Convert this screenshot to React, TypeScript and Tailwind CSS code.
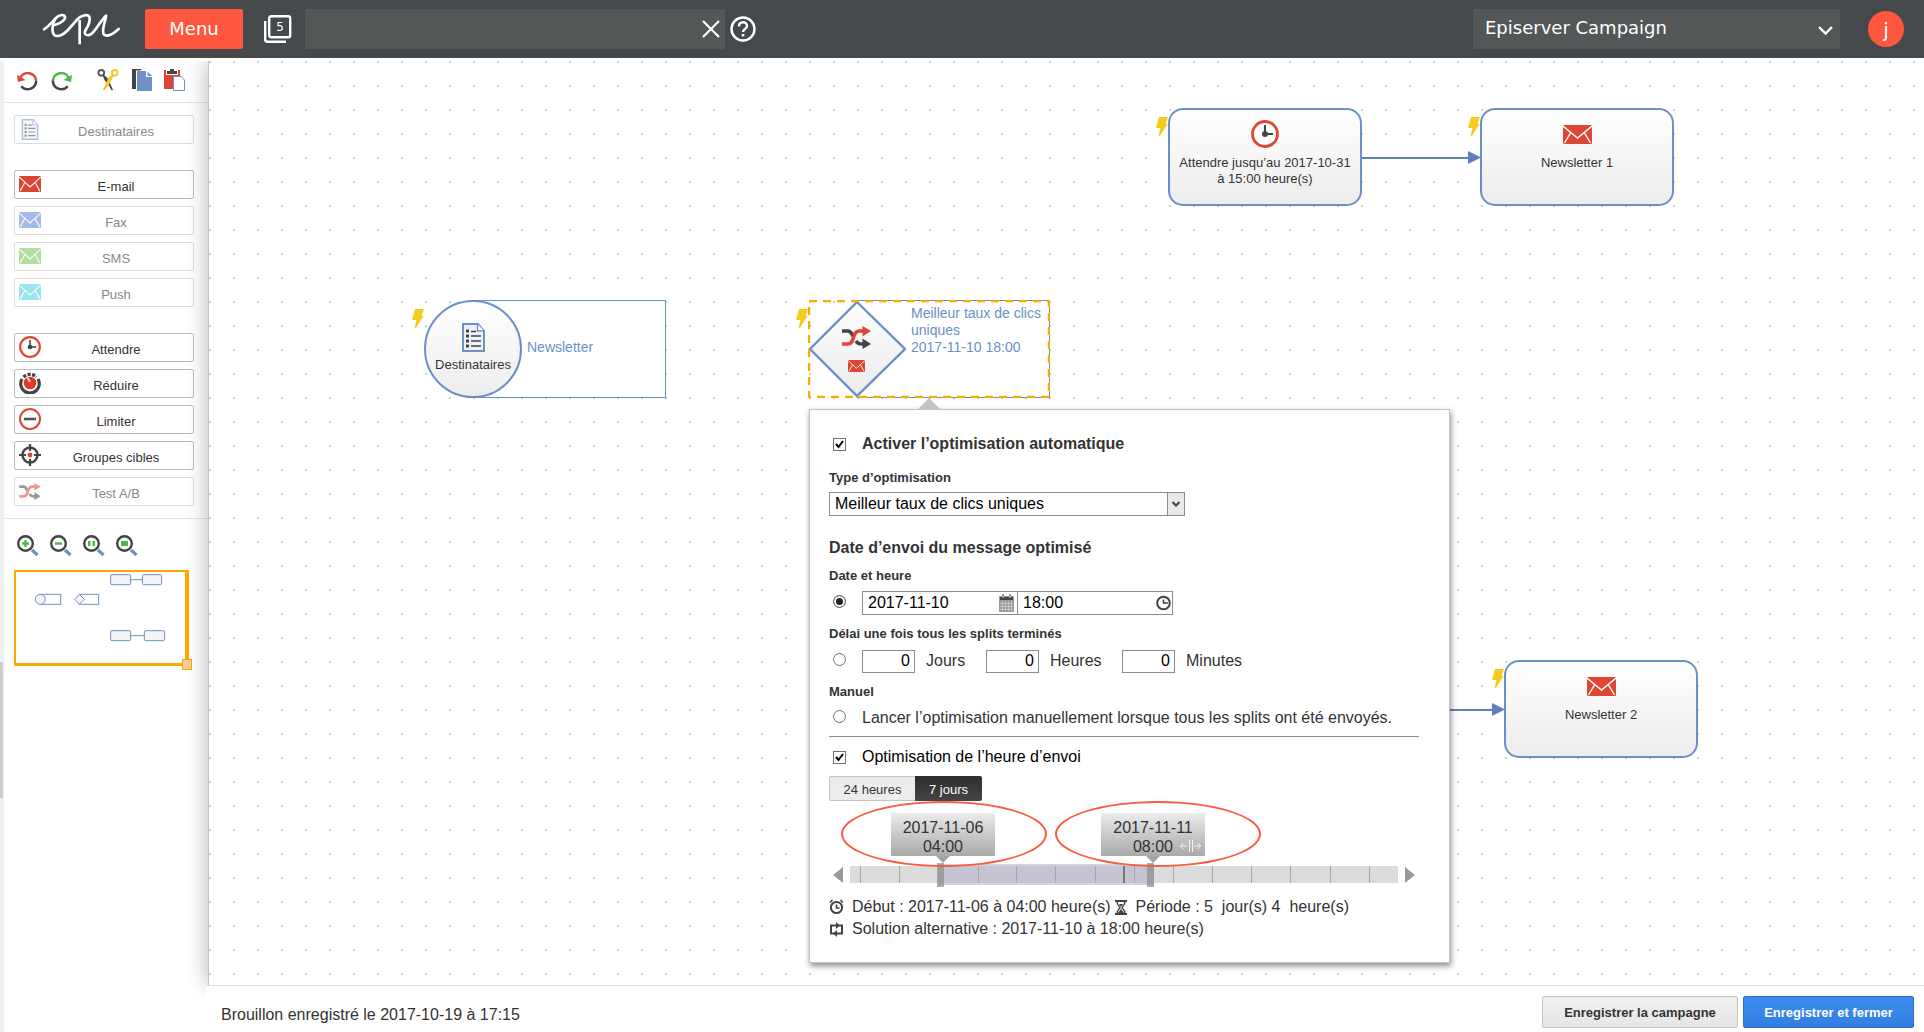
import type { ReactNode } from "react";

type IconProps = { className?: string };

/* ---------- Icons ---------- */

function Logo({ className }: IconProps) {
  return (
    <svg className={className} viewBox="126 36 240 102" fill="none" stroke="#fff" strokeWidth="8" strokeLinecap="round" strokeLinejoin="round" aria-hidden="true">
      <path d="M132 88C146 79 157 66 166 56C176 44 189 43 194 48C199 56 186 70 164 75" />
      <path d="M166 56C156 74 154 98 164 106C176 112 190 104 204 90L232 58C242 47 262 41 268 50C273 62 262 82 256 92" />
      <path d="M239 60V133" strokeLinecap="butt" />
      <path d="M256 92C250 104 262 111 276 100C290 88 302 62 318 47C318 62 302 94 312 104C324 112 342 100 356 87" />
    </svg>
  );
}

function Mail({ className, color = "#dd4632" }: IconProps & { color?: string }) {
  return (
    <svg className={className} viewBox="0 0 29 19" preserveAspectRatio="none" aria-hidden="true">
      <rect width="29" height="19" rx="1" fill={color} />
      <path d="M0 1L14.500 13L29 1M7.500 8L1.500 18M21.500 8L27.500 18" fill="none" stroke="#fff" strokeWidth="1.400" />
    </svg>
  );
}

function Clock({ className }: IconProps) {
  return (
    <svg className={className} viewBox="0 0 28 28" aria-hidden="true">
      <circle cx="14" cy="14" r="12.500" fill="#fff" stroke="#dd4632" strokeWidth="2.800" />
      <path d="M14 5V14H22" fill="none" stroke="#444" strokeWidth="2" />
      <circle cx="14" cy="14" r="3" fill="#444" />
    </svg>
  );
}

function Doc({ className }: IconProps) {
  return (
    <svg className={className} viewBox="0 0 23 29" aria-hidden="true">
      <path d="M1 1H16L22 8V28H1Z" fill="#eef2fa" stroke="#7090c8" strokeWidth="2" />
      <path d="M15.500 1V8H22" fill="#fff" stroke="#7090c8" strokeWidth="1.500" />
      <g stroke="#444" strokeWidth="1.600">
        <path d="M4 8H7M4 13H7M4 18H7M4 23H7" strokeWidth="3" />
        <path d="M9 8.500H14M9 13H19M9 18H19M9 23H19" />
      </g>
    </svg>
  );
}

function Shuffle({ className }: IconProps) {
  return (
    <svg className={className} viewBox="0 0 29 23" aria-hidden="true">
      <path d="M0 5H6C9 5 9.500 8 11 10M14 15C16 18 17 18 22 18" fill="none" stroke="#444" strokeWidth="3.600" />
      <path d="M20.500 12.500L29 18L20.500 23Z" fill="#444" />
      <path d="M0 18H6C13 18 10 5 17 5H22" fill="none" stroke="#dd4632" strokeWidth="3.600" />
      <path d="M20.500 0L29 5L20.500 10.500Z" fill="#dd4632" />
    </svg>
  );
}

function Dial({ className }: IconProps) {
  return (
    <svg className={className} viewBox="0 0 22 22" aria-hidden="true">
      <path d="M3 7A9.300 9.300 0 1 0 19 7" fill="none" stroke="#444" strokeWidth="3.200" />
      <path d="M4.500 5A9.300 9.300 0 0 1 17.500 5" fill="none" stroke="#444" strokeWidth="3.200" strokeDasharray="3.200 1.400" />
      <circle cx="11" cy="11" r="6.300" fill="#dd3a2a" />
      <path d="M8.500 5.500L11 10" stroke="#f8d0c8" strokeWidth="1.800" />
    </svg>
  );
}

function Limit({ className }: IconProps) {
  return (
    <svg className={className} viewBox="0 0 22 22" aria-hidden="true">
      <circle cx="11" cy="11" r="10" fill="#fff" stroke="#dd4632" strokeWidth="2" />
      <path d="M5 11H17" stroke="#555" strokeWidth="2.600" />
    </svg>
  );
}

function Target({ className }: IconProps) {
  return (
    <svg className={className} viewBox="0 0 22 22" aria-hidden="true">
      <circle cx="11" cy="11" r="7.500" fill="none" stroke="#444" strokeWidth="2.400" />
      <path d="M11 0V7M11 15V22M0 11H7M15 11H22" stroke="#444" strokeWidth="2.200" />
      <circle cx="11" cy="11" r="2.400" fill="#dd4632" />
    </svg>
  );
}

function Undo({ className, color }: IconProps & { color: string }) {
  return (
    <svg className={className} viewBox="0 0 22 22" aria-hidden="true">
      <path d="M3.500 8A8.800 8.800 0 0 1 20 11" fill="none" stroke={color} strokeWidth="2.600" />
      <path d="M20 11A8.800 8.800 0 0 1 4.500 17" fill="none" stroke="#444" strokeWidth="2.600" />
      <path d="M0 5L1 12.500L9 10.500Z" fill={color} />
    </svg>
  );
}

function Scissors({ className }: IconProps) {
  return (
    <svg className={className} viewBox="0 0 22 23" aria-hidden="true">
      <circle cx="4" cy="4" r="3" fill="none" stroke="#555" strokeWidth="2" />
      <path d="M6 6.500L10 10L15.500 22L12 16L8.500 12Z" fill="#444" stroke="#444" strokeWidth="1.500" />
      <circle cx="18" cy="4" r="3" fill="none" stroke="#f5c62a" strokeWidth="2" />
      <path d="M16 6.500L12 10L6.500 22L10.500 17L14 11Z" fill="#f5c62a" stroke="#f5c62a" strokeWidth="1.800" />
    </svg>
  );
}

function Copy({ className }: IconProps) {
  return (
    <svg className={className} viewBox="0 0 20 22" aria-hidden="true">
      <path d="M0 0H10L8 1.500H4V20H0Z" fill="#444" />
      <path d="M5 2H14V8H20V22H5Z" fill="#7090c8" />
      <path d="M15.500 2.500L20 7H15.500Z" fill="#7090c8" />
    </svg>
  );
}

function Paste({ className }: IconProps) {
  return (
    <svg className={className} viewBox="0 0 21 22" aria-hidden="true">
      <path d="M0 1H16V20H0Z" fill="#dd4632" />
      <path d="M2 1H14V6H2Z" fill="#fff" />
      <path d="M6 0H10V2H13V5H3V2H6Z" fill="#444" />
      <path d="M9.500 7.500H17L20.500 11V21.500H9.500Z" fill="#fff" stroke="#7090c8" />
    </svg>
  );
}

function Magnifier({ children }: { children: ReactNode }) {
  return (
    <svg className="h-[22px] w-[22px]" viewBox="0 0 22 22" aria-hidden="true">
      <path d="M15 15L20.500 20" stroke="#7090c8" strokeWidth="3.400" />
      <circle cx="8.500" cy="8.500" r="7.300" fill="#fff" stroke="#444" strokeWidth="2.400" />
      <g fill="#4cb848">{children}</g>
    </svg>
  );
}

function Bolt({ className }: IconProps) {
  return (
    <svg className={className} width="12" height="19" viewBox="0 0 12 19" aria-hidden="true">
      <path d="M3 0H12L9.500 7H11.500L4 19H2.500L4.500 11H0Z" fill="#f4cb1e" />
    </svg>
  );
}

/* ---------- Header ---------- */

function Header() {
  return (
    <header className="relative z-20 flex h-[61px] shrink-0 items-center border-b-[3px] border-white bg-[#45494b] pb-[1px] font-['DejaVu_Sans',sans-serif] text-white">
      <Logo className="ml-[42px] h-[34px] w-[80px]" />
      <button type="button" className="ml-[23px] h-10 w-[98px] rounded-[2px] bg-[#ff5640] text-lg">Menu</button>
      <button type="button" aria-label="5 éléments ouverts" className="ml-[21px]">
        <svg className="h-7 w-7" viewBox="0 0 28 28" fill="none" stroke="#fff" strokeWidth="2.400" aria-hidden="true">
          <rect x="5.200" y="1.200" width="21" height="21" rx="2" />
          <path d="M1.200 6V24.500Q1.200 26.700 3.500 26.700H22" />
          <text x="16" y="15.500" fill="#fff" stroke="none" fontSize="12" textAnchor="middle">5</text>
        </svg>
      </button>
      <div className="ml-[13px] flex h-10 w-[420px] items-center bg-[#535757]">
        <input type="text" aria-label="Recherche" className="h-full min-w-0 flex-1 bg-transparent px-3 outline-none" />
        <button type="button" aria-label="Effacer" className="mr-[5px]">
          <svg className="h-[18px] w-[18px]" viewBox="0 0 18 18" stroke="#fff" strokeWidth="2.200" aria-hidden="true"><path d="M1 1L17 17M17 1L1 17" /></svg>
        </button>
      </div>
      <button type="button" aria-label="Aide" className="ml-[5px]">
        <svg className="h-[26px] w-[26px]" viewBox="0 0 26 26" fill="none" stroke="#fff" aria-hidden="true">
          <circle cx="13" cy="13" r="11.500" strokeWidth="2.400" />
          <path d="M9 10.500C9 5 17 5 17 10C17 13 13 13 13 16" strokeWidth="2.400" />
          <path d="M13 18V20.500" strokeWidth="2.600" />
        </svg>
      </button>
      <div className="relative ml-auto h-10 w-[367px] bg-[#535757]">
        <select aria-label="Produit" className="h-full w-full appearance-none bg-transparent px-3 pb-[2px] text-lg leading-6 outline-none">
          <option>Episerver Campaign</option>
        </select>
        <svg className="pointer-events-none absolute right-[7px] top-[17px] h-[10px] w-[15px]" viewBox="0 0 15 10" fill="none" stroke="#fff" strokeWidth="2.400" aria-hidden="true"><path d="M1 1L7.500 7.500L14 1" /></svg>
      </div>
      <button type="button" aria-label="Profil" className="ml-7 mr-[20px] h-9 w-9 rounded-full bg-[#ff5640] pt-[2px] text-xl leading-6">j</button>
    </header>
  );
}

/* ---------- Sidebar ---------- */

function Tool({ label, icon, disabled }: { label: string; icon: ReactNode; disabled?: boolean }) {
  return (
    <button
      type="button"
      disabled={disabled}
      className="flex h-[29px] w-full items-center rounded-[2px] border border-[#bcbcbc] bg-white pl-1 pr-[2px] text-[13px] text-[#333] disabled:border-[#dcdcdc] disabled:text-[#888]"
    >
      <span className={disabled ? "flex w-[22px] justify-center pb-[1px] opacity-55" : "flex w-[22px] justify-center pb-[1px]"}>{icon}</span>
      <span className="flex-1 pt-1 text-center">{label}</span>
    </button>
  );
}

function Minimap() {
  return (
    <div className="relative mx-[10px] mt-[13px] h-24 w-[175px] border-b-[3px] border-l-2 border-r-4 border-t-2 border-[#ffa800]">
      <svg className="h-full w-full" viewBox="48 846 507 273" fill="#f4f4f4" stroke="#7090c8" strokeWidth="3" aria-hidden="true">
        <rect x="332" y="854" width="60" height="30" rx="4" />
        <rect x="427" y="854" width="58" height="30" rx="4" />
        <path d="M392 869H427M392 1037H433" />
        <rect x="122" y="913" width="60" height="30" fill="#fff" />
        <circle cx="121" cy="928" r="15" />
        <rect x="238" y="913" width="58" height="30" fill="#fff" />
        <path d="M238 913L253 928L238 943L224 928Z" />
        <rect x="332" y="1022" width="60" height="30" rx="4" />
        <rect x="433" y="1022" width="61" height="30" rx="4" />
      </svg>
      <span className="absolute -bottom-[7px] -right-[7px] h-[11px] w-[10px] border border-[#ffa800] bg-[#ffcc99]" />
    </div>
  );
}

const ICON = "h-[22px] w-[22px]";
const MAIL = "h-4 w-[22px]";

function Sidebar() {
  return (
    <aside className="w-[204px] shrink-0 bg-white">
      <div className="flex h-[42px] items-center border-b border-[#e4e4e4] pb-[3px] pl-[13px]">
        <button type="button" aria-label="Annuler"><Undo className="h-[21px] w-[21px]" color="#dd4632" /></button>
        <button type="button" aria-label="Rétablir" className="ml-[13px]"><Undo className="h-[21px] w-[21px] -scale-x-100" color="#4cb848" /></button>
        <button type="button" aria-label="Couper" className="ml-[25px]"><Scissors className="h-[22px] w-[22px]" /></button>
        <button type="button" aria-label="Copier" className="ml-[13px]"><Copy className="h-[22px] w-[20px]" /></button>
        <button type="button" aria-label="Coller" className="ml-3"><Paste className="h-[22px] w-[21px]" /></button>
      </div>
      <nav aria-label="Éléments" className="flex flex-col gap-[26px] px-[10px] pb-3 pr-[14px] pt-3">
        <Tool label="Destinataires" disabled icon={<Doc className="h-[21px] w-5" />} />
        <div className="flex flex-col gap-[7px]">
          <Tool label="E-mail" icon={<Mail className={MAIL} />} />
          <Tool label="Fax" disabled icon={<Mail className={MAIL} color="#5a83d8" />} />
          <Tool label="SMS" disabled icon={<Mail className={MAIL} color="#70c550" />} />
          <Tool label="Push" disabled icon={<Mail className={MAIL} color="#48cfe0" />} />
        </div>
        <div className="flex flex-col gap-[7px]">
          <Tool label="Attendre" icon={<Clock className={ICON} />} />
          <Tool label="Réduire" icon={<Dial className={ICON} />} />
          <Tool label="Limiter" icon={<Limit className={ICON} />} />
          <Tool label="Groupes cibles" icon={<Target className={ICON} />} />
          <Tool label="Test A/B" disabled icon={<Shuffle className="h-[17px] w-[22px]" />} />
        </div>
      </nav>
      <div className="flex gap-[11px] border-t border-[#e4e4e4] pl-[13px] pt-4">
        <button type="button" aria-label="Zoom avant"><Magnifier><path d="M7.300 5H9.700V7.300H12V9.700H9.700V12H7.300V9.700H5V7.300H7.300Z" /></Magnifier></button>
        <button type="button" aria-label="Zoom arrière"><Magnifier><path d="M5 7.300H12V9.700H5Z" /></Magnifier></button>
        <button type="button" aria-label="Taille réelle"><Magnifier><path d="M5 6H7.500V11H5ZM9.500 6H12V11H9.500Z" /></Magnifier></button>
        <button type="button" aria-label="Ajuster"><Magnifier><path d="M5 6H12V11H5Z" /></Magnifier></button>
      </div>
      <Minimap />
    </aside>
  );
}

/* ---------- Canvas nodes ---------- */

function Box({ place, icon, children }: { place: string; icon: ReactNode; children: ReactNode }) {
  return (
    <div className={`absolute ${place} h-[98px] w-[194px] rounded-[15px] border-2 border-[#6c8fc9] bg-linear-to-b from-white to-[#ededed]`}>
      <div className="flex h-full flex-col items-center text-center text-[13px] leading-4 text-[#333]">
        <div className="mb-[2px] mt-[5px] flex h-[38px] items-center">{icon}</div>
        <div className="whitespace-nowrap">{children}</div>
      </div>
      <Bolt className="absolute -left-[14px] top-[7px]" />
    </div>
  );
}

function Arrow({ place }: { place: string }) {
  return (
    <div className={`absolute ${place} flex h-[13px] items-center`}>
      <span className="h-[2px] flex-1 bg-[#6080bb]" />
      <svg className="h-[13px] w-[13px]" viewBox="0 0 13 13" aria-hidden="true"><path d="M0 0L13 6.500L0 13Z" fill="#6080bb" /></svg>
    </div>
  );
}

/* ---------- Optimisation panel ---------- */

function Check({ id }: { id: string }) {
  return (
    <span className="relative ml-1 h-[13px] w-[13px]">
      <input id={id} type="checkbox" defaultChecked className="peer block h-[13px] w-[13px] appearance-none border border-[#707070] bg-white" />
      <svg className="pointer-events-none absolute left-[2px] top-[2px] hidden h-[9px] w-[9px] peer-checked:block" viewBox="0 0 9 9" fill="none" stroke="#000" strokeWidth="2" aria-hidden="true"><path d="M1 4L3.500 7L8 1" /></svg>
    </span>
  );
}

function Radio({ id, checked }: { id: string; checked?: boolean }) {
  return (
    <input
      id={id}
      type="radio"
      name="send"
      defaultChecked={checked}
      className="mb-1 ml-1 mr-4 h-[13px] w-[13px] shrink-0 appearance-none rounded-full border border-[#707070] bg-white checked:bg-[#222] checked:shadow-[inset_0_0_0_2px_#fff]"
    />
  );
}

function Amount({ id, label, className }: { id: string; label: string; className: string }) {
  return (
    <div className={`flex items-center ${className}`}>
      <input id={id} type="text" defaultValue="0" className="h-[23px] w-[53px] border border-[#8c8c8c] px-1 text-right text-black outline-none" />
      <label htmlFor={id} className="ml-[11px]">{label}</label>
    </div>
  );
}

const TRACK_WIDTH = 548;
const TICKS = [10, 49, 128, 166, 205, 245, 284, 323, 362, 401, 440, 480, 519];

function Marker({ place, date, time, children }: { place: string; date: string; time: string; children?: ReactNode }) {
  return (
    <div className={`absolute ${place} top-3 flex w-[104px] flex-col items-center`}>
      <div className="relative h-[43px] w-full bg-linear-to-b from-[#ececec] to-[#a9a9a9] pt-[5px] text-center leading-[19px]">
        {date}<br />{time}
        {children}
      </div>
      <svg className="h-[7px] w-[14px]" viewBox="0 0 14 7" aria-hidden="true"><path d="M0 0H14L7 7Z" fill="#a3a3a3" /></svg>
    </div>
  );
}

function Timeline() {
  const pct = (v: number) => `${(v / TRACK_WIDTH) * 100}%`;
  return (
    <div>
      <div className="relative h-[65px]">
        <Marker place="left-[62px]" date="2017-11-06" time="04:00" />
        <Marker place="left-[272px]" date="2017-11-11" time="08:00">
          <svg className="absolute bottom-1 right-1 h-3 w-[21px]" viewBox="0 0 21 12" fill="none" stroke="#f4f4f4" aria-hidden="true">
            <path d="M9.500 0V12M12.500 0V12M0 6H7M14 6H21" />
            <path d="M3.500 3L0.500 6L3.500 9M17.500 3L20.500 6L17.500 9" />
          </svg>
        </Marker>
        <span className="absolute left-[12px] top-0 z-10 h-[66px] w-[206px] rounded-[50%] border-2 border-[#fb5a41]" />
        <span className="absolute left-[226px] top-0 z-10 h-[66px] w-[206px] rounded-[50%] border-2 border-[#fb5a41]" />
      </div>
      <div className="flex h-[17px] items-center pl-1 pr-1">
        <button type="button" aria-label="Précédent"><svg className="h-4 w-[10px]" viewBox="0 0 10 16" aria-hidden="true"><path d="M10 0V16L0 8Z" fill="#999" /></svg></button>
        <div className="relative mx-[7px] h-full flex-1 bg-[#dcdcdc]">
          <span className="absolute -bottom-[2px] -top-[2px] bg-[#b4b4cc]/60" style={{ left: pct(88), right: pct(244) }} />
          {TICKS.map((t) => <span key={t} className="absolute inset-y-0 w-px bg-[#a8a8a8]" style={{ left: pct(t) }} />)}
          <span className="absolute inset-y-0 w-[2px] bg-[#777]" style={{ left: pct(273) }} />
          <span className="absolute -bottom-1 -top-[3px] w-[7px] bg-[#8c8c8c]/70" style={{ left: pct(87) }} />
          <span className="absolute -bottom-1 -top-[3px] w-[7px] bg-[#8c8c8c]/70" style={{ left: pct(297) }} />
          <input type="range" aria-label="Début" min={0} max={TRACK_WIDTH} defaultValue={90} className="absolute inset-0 h-full w-full opacity-0" />
          <input type="range" aria-label="Fin" min={0} max={TRACK_WIDTH} defaultValue={300} className="absolute inset-0 h-full w-full opacity-0" />
        </div>
        <button type="button" aria-label="Suivant"><svg className="h-4 w-[10px]" viewBox="0 0 10 16" aria-hidden="true"><path d="M0 0V16L10 8Z" fill="#999" /></svg></button>
      </div>
    </div>
  );
}

const SUBLABEL = "text-[13px] font-bold leading-5";

function Panel() {
  return (
    <section className="absolute left-[600px] top-[348px] z-10 w-[641px] border border-[#c4c4c4] bg-white pb-[22px] pl-[19px] pr-[30px] pt-6 text-base leading-5 text-[#333] shadow-[1px_3px_6px_rgba(0,0,0,0.45)]">
      <svg className="absolute -top-3 left-[107px] h-3 w-6" viewBox="0 0 24 12" aria-hidden="true"><path d="M0 12L12 0L24 12Z" fill="#c4c4c4" /></svg>
      <div className="flex h-5 items-center gap-4">
        <Check id="auto" />
        <label htmlFor="auto" className="font-bold">Activer l’optimisation automatique</label>
      </div>
      <label htmlFor="type" className={`mt-[14px] block ${SUBLABEL}`}>Type d’optimisation</label>
      <div className="relative mt-1 h-6 w-[356px]">
        <select id="type" className="h-full w-full appearance-none border border-[#8c8c8c] bg-white px-[5px] text-black outline-none">
          <option>Meilleur taux de clics uniques</option>
        </select>
        <span className="pointer-events-none absolute inset-y-0 right-0 flex w-[18px] items-center justify-center border border-[#8c8c8c] bg-[#e9e9e9]">
          <svg className="h-[6px] w-2" viewBox="0 0 8 6" fill="none" stroke="#444" strokeWidth="2" aria-hidden="true"><path d="M0.500 1L4 4.500L7.500 1" /></svg>
        </span>
      </div>
      <h2 className="mt-[22px] font-bold">Date d’envoi du message optimisé</h2>
      <label htmlFor="r-date" className={`mt-2 block ${SUBLABEL}`}>Date et heure</label>
      <div className="mt-[5px] flex h-6 items-center">
        <Radio id="r-date" checked />
        <div className="relative h-6 w-[156px]">
          <input type="text" aria-label="Date" defaultValue="2017-11-10" className="h-full w-full border border-[#8c8c8c] px-[5px] text-black outline-none" />
          <svg className="pointer-events-none absolute right-1 top-[3px] h-[18px] w-[15px]" viewBox="0 0 15 18" aria-hidden="true">
            <rect y="2" width="15" height="16" rx="1" fill="#999" />
            <path d="M1 3H14V6H1Z" fill="#444" />
            <path d="M3 0H5V4H3ZM10 0H12V4H10Z" fill="#999" />
            <path d="M1 9.500H14M1 12.500H14M1 15.500H14M3.500 7V17M6.500 7V17M9.500 7V17M12.500 7V17" stroke="#ddd" strokeWidth="0.600" />
          </svg>
        </div>
        <div className="relative -ml-px h-6 w-[156px]">
          <input type="text" aria-label="Heure" defaultValue="18:00" className="h-full w-full border border-[#8c8c8c] px-[5px] text-black outline-none" />
          <svg className="pointer-events-none absolute right-[2px] top-1 h-4 w-[15px]" viewBox="0 0 15 16" fill="none" stroke="#444" aria-hidden="true">
            <circle cx="7.500" cy="8" r="6.300" strokeWidth="2" />
            <path d="M7.500 4.500V8H12" strokeWidth="1.600" />
          </svg>
        </div>
      </div>
      <label htmlFor="r-delay" className={`mt-[9px] block ${SUBLABEL}`}>Délai une fois tous les splits terminés</label>
      <div className="mt-[5px] flex h-6 items-center">
        <Radio id="r-delay" />
        <Amount id="days" label="Jours" className="w-[124px]" />
        <Amount id="hours" label="Heures" className="w-[136px]" />
        <Amount id="minutes" label="Minutes" className="" />
      </div>
      <p className={`mt-[9px] ${SUBLABEL}`}>Manuel</p>
      <div className="mt-[5px] flex h-[22px] items-center">
        <Radio id="r-manual" />
        <label htmlFor="r-manual">Lancer l’optimisation manuellement lorsque tous les splits ont été envoyés.</label>
      </div>
      <hr className="mt-[7px] border-[#8c8c8c]" />
      <div className="mt-[10px] flex h-5 items-center gap-4 text-black">
        <Check id="hour" />
        <label htmlFor="hour">Optimisation de l’heure d’envoi</label>
      </div>
      <div className="mt-[9px] flex h-[25px] text-[13px]">
        <button type="button" className="w-[86px] rounded-l-[2px] border border-r-0 border-[#c4c4c4] bg-[#ececec] pt-[2px]">24 heures</button>
        <button type="button" className="w-[67px] rounded-r-[2px] bg-linear-to-b from-[#2e2e2e] to-[#454545] pt-[2px] text-white">7 jours</button>
      </div>
      <Timeline />
      <div className="mt-[13px] flex items-center leading-[22px]">
        <svg className="mr-2 h-4 w-[15px]" viewBox="0 0 15 16" fill="none" stroke="#444" aria-hidden="true">
          <circle cx="7.500" cy="8.500" r="5.600" strokeWidth="2" />
          <path d="M7.500 5.500V9H10.500M1 3.500L3.500 1M14 3.500L11.500 1" strokeWidth="1.600" />
        </svg>
        <span>Début : 2017-11-06 à 04:00 heure(s)</span>
        <svg className="ml-1 mr-[9px] h-[15px] w-3" viewBox="0 0 12 15" fill="none" stroke="#444" aria-hidden="true">
          <path d="M0 1H12M0 14H12" strokeWidth="2" />
          <path d="M2 1C2 6 5 6 5 7.500C5 9 2 9 2 14M10 1C10 6 7 6 7 7.500C7 9 10 9 10 14" strokeWidth="1.400" />
          <path d="M4 4H8L6 7ZM3 13L6 9L9 13Z" fill="#444" stroke="none" />
        </svg>
        <span className="whitespace-pre">Période : 5  jour(s) 4  heure(s)</span>
      </div>
      <div className="flex items-center leading-[22px]">
        <svg className="mr-2 h-[15px] w-[15px]" viewBox="0 0 15 15" fill="none" stroke="#444" strokeWidth="2" aria-hidden="true">
          <path d="M5 11.500H2V3.500H9M10 3.500H13V11.500H6" />
          <path d="M7 0L11 3.500L7 7ZM8 8L4 11.500L8 15Z" fill="#444" stroke="none" />
        </svg>
        <span>Solution alternative : 2017-11-10 à 18:00 heure(s)</span>
      </div>
    </section>
  );
}

function Canvas() {
  return (
    <main className="relative flex-1 overflow-hidden border-l border-[#c4c4c4] bg-white bg-[conic-gradient(from_270deg_at_2px_2px,#cccccc_90deg,transparent_0)] bg-[size:24px_24px] shadow-[0_0_20px_rgba(0,0,0,0.3)]">
      <Box place="left-[959px] top-[47px]" icon={<Clock className="h-7 w-7" />}>Attendre jusqu’au 2017-10-31<br />à 15:00 heure(s)</Box>
      <Arrow place="left-[1153px] top-[90px] w-[119px]" />
      <Box place="left-[1271px] top-[47px]" icon={<Mail className="h-[19px] w-[29px]" />}>Newsletter 1</Box>

      <div className="absolute left-[215px] top-[239px] h-[98px] w-[242px] text-[#6c8fc9]">
        <Bolt className="absolute -left-3 top-[9px]" />
        <div className="ml-[49px] flex h-full items-center border border-[#6c8fc9] bg-white pl-[53px] pb-1 text-sm">Newsletter</div>
        <div className="absolute left-0 top-0 flex h-[98px] w-[98px] flex-col items-center rounded-full border-2 border-[#6c8fc9] bg-linear-to-b from-white to-[#ededed] pt-[21px] text-[13px] leading-4 text-[#333]">
          <Doc className="h-[29px] w-[23px]" />
          <span className="mt-[5px]">Destinataires</span>
        </div>
      </div>

      <div className="absolute left-[599px] top-[239px] h-[98px] w-[242px]">
        <Bolt className="absolute -left-3 top-[9px]" />
        <div className="ml-[49px] h-full border border-[#6c8fc9] bg-white pl-[53px] pt-1 text-sm leading-[17px] text-[#6c8fc9]">
          Meilleur taux de clics<br />uniques<br />2017-11-10 18:00
        </div>
        <svg className="absolute left-0 top-0 h-[98px] w-[98px]" viewBox="0 0 98 98" aria-hidden="true">
          <defs><linearGradient id="fade" x1="0" x2="0" y1="0" y2="1"><stop stopColor="#fff" /><stop offset="1" stopColor="#ebebeb" /></linearGradient></defs>
          <path d="M49 2L97 49L49 96L2 49Z" fill="url(#fade)" stroke="#6c8fc9" strokeWidth="2.400" />
        </svg>
        <svg className="absolute left-0 top-0 h-[98px] w-[242px]" viewBox="0 0 242 98" fill="none" aria-hidden="true">
          <rect x="1" y="1" width="240" height="96" stroke="#ffa800" strokeWidth="2.400" strokeDasharray="8 6" />
        </svg>
        <Shuffle className="absolute left-[34px] top-[26px] h-[23px] w-[29px]" />
        <Mail className="absolute left-[40px] top-[60px] h-3 w-[17px]" />
      </div>

      <Arrow place="left-[1240px] top-[642px] w-[56px]" />
      <Box place="left-[1295px] top-[599px]" icon={<Mail className="h-[19px] w-[29px]" />}>Newsletter 2</Box>
      <Panel />
    </main>
  );
}

export default function App() {
  return (
    <div className="flex h-screen flex-col overflow-hidden bg-white font-['Liberation_Sans',Arial,sans-serif] text-[#333]">
      <Header />
      <div className="flex min-h-0 flex-1">
        <div className="w-1 shrink-0 bg-[#f0f0f0] pt-[601px]"><div className="h-[136px] w-[3px] bg-[#cccccc]" /></div>
        <Sidebar />
        <div className="flex min-w-0 flex-1 flex-col">
          <Canvas />
          <footer className="relative z-10 -ml-[2px] flex h-[47px] items-center gap-[5px] border-t border-[#dedede] bg-white pl-[15px] pr-[10px]">
            <p className="mr-auto pt-3 text-base">Brouillon enregistré le 2017-10-19 à 17:15</p>
            <button type="button" className="mt-[6px] h-8 w-[196px] rounded-[2px] border border-[#c4c4c4] bg-linear-to-b from-[#f0f0f0] to-[#e6e6e6] pt-[2px] text-[13px] font-bold">Enregistrer la campagne</button>
            <button type="button" className="mt-[6px] h-8 w-[171px] rounded-[2px] border border-[#2a6fd0] bg-linear-to-b from-[#3d8df0] to-[#2f7ee0] pt-[2px] text-[13px] font-bold text-white">Enregistrer et fermer</button>
          </footer>
        </div>
      </div>
    </div>
  );
}
